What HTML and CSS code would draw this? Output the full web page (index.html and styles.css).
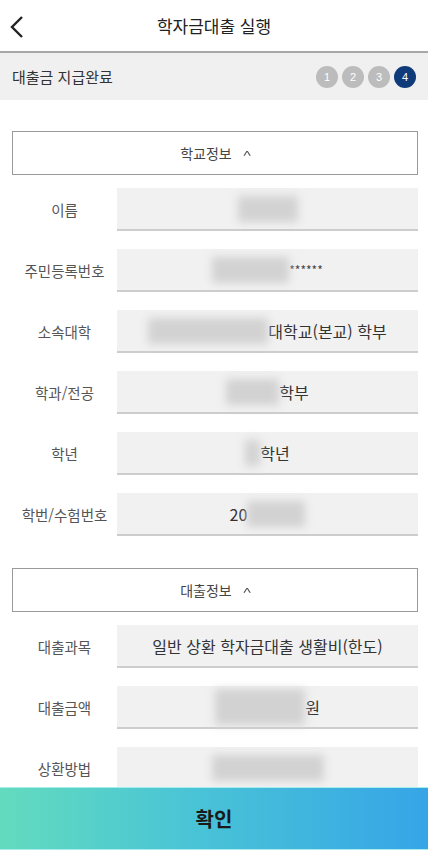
FILE: index.html
```html
<!DOCTYPE html>
<html lang="ko">
<head>
  <meta charset="UTF-8">
  <title>학자금대출 실행</title>
  <meta name="viewport" content="width=device-width, initial-scale=1.0">
  <link rel="stylesheet" href="styles.css">
</head>
<body>
  <header class="top-bar">
    <a class="back-btn" href="#" aria-label="뒤로">
      <svg width="14" height="24" viewBox="0 0 14 24"><path d="M12 2 L2 12 L12 22" fill="none" stroke="#222" stroke-width="2.4"/></svg>
    </a>
    <h1>학자금대출 실행</h1>
  </header>

  <div class="step-bar">
    <span class="step-title">대출금 지급완료</span>
    <div class="steps">
      <span class="step">1</span>
      <span class="step">2</span>
      <span class="step">3</span>
      <span class="step active">4</span>
    </div>
  </div>

  <main class="content">
    <!-- 학교정보 -->
    <section class="info-section">
      <button class="section-toggle">학교정보 <span class="caret">^</span></button>
      <div class="row">
        <span class="row-label">이름</span>
        <div class="row-value"><span class="blur" style="width:60px"></span></div>
      </div>
      <div class="row">
        <span class="row-label">주민등록번호</span>
        <div class="row-value"><span class="blur" style="width:77px"></span><span class="stars">******</span></div>
      </div>
      <div class="row">
        <span class="row-label">소속대학</span>
        <div class="row-value"><span class="blur" style="width:120px"></span>대학교(본교) 학부</div>
      </div>
      <div class="row">
        <span class="row-label">학과/전공</span>
        <div class="row-value"><span class="blur" style="width:53px"></span>학부</div>
      </div>
      <div class="row">
        <span class="row-label">학년</span>
        <div class="row-value"><span class="blur" style="width:15px"></span>학년</div>
      </div>
      <div class="row">
        <span class="row-label">학번/수험번호</span>
        <div class="row-value">20<span class="blur" style="width:58px"></span></div>
      </div>
    </section>

    <!-- 대출정보 -->
    <section class="info-section">
      <button class="section-toggle">대출정보 <span class="caret">^</span></button>
      <div class="row">
        <span class="row-label">대출과목</span>
        <div class="row-value">일반 상환 학자금대출 생활비(한도)</div>
      </div>
      <div class="row">
        <span class="row-label">대출금액</span>
        <div class="row-value"><span class="blur tall" style="width:90px"></span>원</div>
      </div>
      <div class="row">
        <span class="row-label">상환방법</span>
        <div class="row-value"><span class="blur" style="width:112px"></span></div>
      </div>
      <div class="row">
        <span class="row-label">거치기간</span>
        <div class="row-value"><span class="blur" style="width:60px"></span></div>
      </div>
    </section>
  </main>

  <button class="confirm-btn">확인</button>
</body>
</html>
```

FILE: styles.css
```css
body {
  margin: 0;
  font-family: "Noto Sans CJK KR", "Noto Sans", sans-serif;
  background: #fff;
  color: #333;
}
.top-bar {
  height: 51px;
  display: flex;
  align-items: center;
  justify-content: center;
  border-bottom: 2px solid #a8a8a8;
  position: relative;
}
.back-btn {
  position: absolute;
  left: 10px;
  top: 15px;
  display: block;
}
.top-bar h1 {
  margin: 0;
  font-size: 17px;
  font-weight: 400;
  color: #222;
}
.step-bar {
  height: 47px;
  background: #f0f0f0;
  display: flex;
  align-items: center;
  justify-content: space-between;
  padding: 0 12px;
}
.step-title { font-size: 15px; color: #333; }
.steps { display: flex; gap: 4px; }
.step {
  width: 22px; height: 22px;
  border-radius: 50%;
  background: #bcbcbc;
  color: #fff;
  font-size: 11px;
  font-family: "Liberation Sans", Arial, sans-serif;
  display: flex; align-items: center; justify-content: center;
}
.step.active { background: #103b7b; }
.content { padding: 31px 10px 120px 12px; }
.info-section { margin-bottom: 32px; }
.section-toggle {
  width: 100%;
  height: 44px;
  background: #fff;
  border: 1px solid #9a9a9a;
  font-family: inherit;
  font-size: 14px;
  color: #444;
  margin-bottom: 13px;
  padding: 0;
}
.caret {
  display: inline-block;
  margin-left: 8px;
  font-size: 11px;
  transform: scaleX(1.6);
  color: #555;
}
.row {
  display: flex;
  align-items: stretch;
  margin-bottom: 18px;
}
.row:last-child { margin-bottom: 0; }
.row-label {
  width: 105px;
  display: flex;
  align-items: center;
  justify-content: center;
  font-size: 14.5px;
  color: #555;
}
.row-value {
  flex: 1;
  height: 41px;
  background: #f1f1f1;
  border-bottom: 2px solid #cdcdcd;
  display: flex;
  align-items: center;
  justify-content: center;
  font-size: 16px;
  color: #333;
}
.blur {
  display: inline-block;
  height: 26px;
  background: #d2d2d2;
  filter: blur(4px);
}
.blur.tall { height: 36px; }
.stars { font-size: 12px; color: #444; }
.confirm-btn {
  position: fixed;
  left: 0; right: 0;
  bottom: 18px;
  height: 63px;
  width: 100%;
  border: none;
  background: linear-gradient(90deg, #63dbbe 0%, #49c4d6 45%, #36a5e7 100%);
  font-family: inherit;
  font-size: 20px;
  font-weight: 700;
  color: #1a1a1a;
  border-top: 1px solid #a9ecee;
  border-bottom: 1px solid #a9ecee;
}
.confirm-btn::after { content: ""; }
body::after {
  content: "";
  position: fixed;
  left: 0; right: 0; bottom: 0;
  height: 18px;
  background: #fff;
}
```
